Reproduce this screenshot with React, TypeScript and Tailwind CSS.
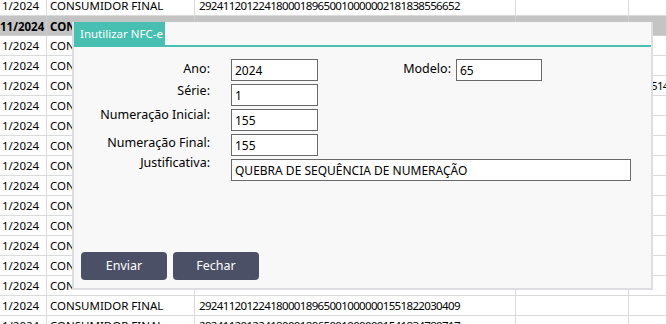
import React from 'react'

type Row = { date: string; name: string; key: string; extra?: string; selected?: boolean }

const rows: Row[] = [
  { date: '1/2024', name: 'CONSUMIDOR FINAL', key: '29241120122418000189650010000002181838556652' },
  { date: '11/2024', name: 'CONSUMIDOR FINAL', key: '', selected: true },
  { date: '1/2024', name: 'CONSUMIDOR FINAL', key: '29241120122418000189650010000002161838556652' },
  { date: '1/2024', name: 'CONSUMIDOR FINAL', key: '29241120122418000189650010000002151838556652' },
  { date: '1/2024', name: 'CONSUMIDOR FINAL', key: '29241120122418000189650010000002141838556652', extra: '514' },
  { date: '1/2024', name: 'CONSUMIDOR FINAL', key: '29241120122418000189650010000002131838556652' },
  { date: '1/2024', name: 'CONSUMIDOR FINAL', key: '29241120122418000189650010000002121838556652' },
  { date: '1/2024', name: 'CONSUMIDOR FINAL', key: '29241120122418000189650010000002111838556652' },
  { date: '1/2024', name: 'CONSUMIDOR FINAL', key: '29241120122418000189650010000002101838556652' },
  { date: '1/2024', name: 'CONSUMIDOR FINAL', key: '29241120122418000189650010000002091838556652' },
  { date: '1/2024', name: 'CONSUMIDOR FINAL', key: '29241120122418000189650010000002081838556652' },
  { date: '1/2024', name: 'CONSUMIDOR FINAL', key: '29241120122418000189650010000002071838556652' },
  { date: '1/2024', name: 'CONSUMIDOR FINAL', key: '29241120122418000189650010000002061838556652' },
  { date: '1/2024', name: 'CONSUMIDOR FINAL', key: '29241120122418000189650010000002051838556652' },
  { date: '1/2024', name: 'CONSUMIDOR FINAL', key: '29241120122418000189650010000001561822030409' },
  { date: '1/2024', name: 'CONSUMIDOR FINAL', key: '29241120122418000189650010000001551822030409' },
  { date: '1/2024', name: 'CONSUMIDOR FINAL', key: '29241120122418000189650010000001541834780717' },
]

function GridRow({ row }: { row: Row }) {
  const cell = `h-[20px] shrink-0 overflow-hidden whitespace-nowrap border-b border-r ${
    row.selected ? 'leading-[21px]' : 'leading-[19px]'
  }`
  const line = row.selected ? 'border-[#cdcdcd]' : 'border-[#dadada]'
  return (
    <div className={`flex ${row.selected ? 'bg-[#c4c4c4] font-bold' : ''}`}>
      <div className={`${cell} ${line} w-[47px] ${row.selected ? 'pl-0' : 'pl-[2px]'}`}>{row.date}</div>
      <div className={`${cell} ${line} w-[148px] pl-[3px]`}>{row.name}</div>
      <div className={`${cell} ${line} w-[321px] pl-[4px] tracking-[-0.65px]`}>{row.key}</div>
      <div className={`${cell} ${line} w-[113px]`}></div>
      <div className={`${cell} ${line} flex-1 pl-[22px] tracking-[-0.65px]`}>{row.extra}</div>
    </div>
  )
}

function Field({
  label,
  value,
  width,
  labelOffset,
}: {
  label: string
  value: string
  width: string
  labelOffset: string
}) {
  return (
    <div className="flex items-start">
      <label className={`w-[136px] shrink-0 text-right leading-[16px] ${labelOffset}`}>{label}</label>
      <input
        readOnly
        value={value}
        className={`ml-[21px] h-[22px] border border-[#6a6a6a] bg-white px-[3px] text-[12px] outline-none ${width}`}
      />
    </div>
  )
}

export default function App() {
  return (
    <div className="relative h-[324px] w-[667px] overflow-hidden bg-white font-['Noto_Sans',sans-serif] text-[11.5px] text-black">
      {/* grid behind the modal */}
      <div className="mt-[-4px]">
        {rows.map((row, i) => (
          <GridRow key={i} row={row} />
        ))}
      </div>

      {/* Inutilizar NFC-e modal */}
      <div className="absolute left-[72px] top-[22px] flex h-[268px] w-[581px] flex-col border-x-2 border-b-2 border-[#dcdee2] bg-[#f8f8f8] text-[12.5px]">
        <div className="flex h-[25px] shrink-0 border-b-2 border-[#47bfb1]">
          <div className="w-[91px] whitespace-nowrap bg-[#47bfb1] pl-[6px] text-[11.5px] leading-[23px] text-white">
            Inutilizar NFC-e
          </div>
        </div>

        <div className="flex flex-col gap-[3px] pt-[12px]">
          <div className="flex items-start">
            <Field label="Ano:" value="2024" width="w-[87px]" labelOffset="mt-[2px]" />
            <label className="mt-[2px] w-[133px] shrink-0 text-right leading-[16px]">Modelo:</label>
            <input
              readOnly
              value="65"
              className="ml-[5px] h-[22px] w-[86px] border border-[#6a6a6a] bg-white px-[3px] text-[12px] outline-none"
            />
          </div>
          <Field label="Série:" value="1" width="w-[87px]" labelOffset="mt-[-1px]" />
          <Field label="Numeração Inicial:" value="155" width="w-[87px]" labelOffset="mt-[-2px]" />
          <Field label="Numeração Final:" value="155" width="w-[87px]" labelOffset="mt-[1px]" />
          <Field
            label="Justificativa:"
            value="QUEBRA DE SEQUÊNCIA DE NUMERAÇÃO"
            width="w-[400px]"
            labelOffset="mt-[-4px]"
          />
        </div>

        <div className="mt-auto flex gap-[6px] pb-[8px] pl-[7px]">
          <button className="h-[28px] w-[86px] rounded-[4px] bg-[#4b5066] text-white">Enviar</button>
          <button className="h-[28px] w-[86px] rounded-[4px] bg-[#4b5066] text-white">Fechar</button>
        </div>
      </div>
    </div>
  )
}
